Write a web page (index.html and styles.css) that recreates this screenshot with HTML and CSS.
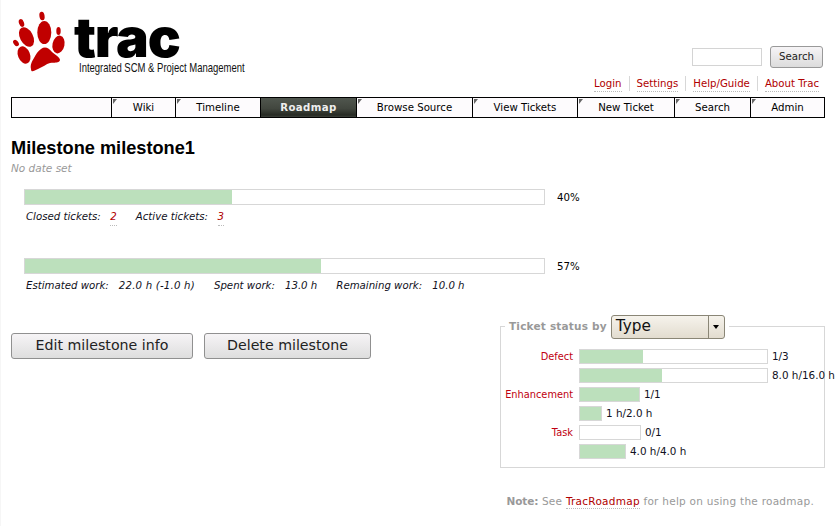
FILE: index.html
```html
<!DOCTYPE html>
<html lang="en">
<head>
<meta charset="utf-8">
<title>Milestone milestone1</title>
<link rel="stylesheet" href="styles.css">
</head>
<body>
<header class="top">
  <a class="logo">
    <svg class="paw" width="62" height="66" viewBox="12 10 62 66">
      <g fill="#c00000">
        <ellipse cx="44.3" cy="32.5" rx="7" ry="11.5"/>
        <ellipse cx="26.5" cy="37" rx="6.5" ry="10.5" transform="rotate(-28 26.5 37)"/>
        <ellipse cx="24" cy="55" rx="6" ry="9" transform="rotate(-22 24 55)"/>
        <ellipse cx="58.5" cy="44.5" rx="6" ry="9" transform="rotate(12 58.5 44.5)"/>
        <ellipse cx="21.5" cy="23" rx="2.5" ry="4" transform="rotate(-20 21.5 23)"/>
        <ellipse cx="42" cy="16" rx="2.6" ry="4.3" transform="rotate(-8 42 16)"/>
        <ellipse cx="58.5" cy="31" rx="2.2" ry="4"/>
        <ellipse cx="16" cy="43" rx="2.3" ry="3.6" transform="rotate(-38 16 43)"/>
        <path d="M41 49c4-3 8-1 11 3 3 3 8 5 8 8-1 4-7 2-10 3-4 1-7 4-12 6-4 2-7 4-7 0-1-4 1-8 3-11 2-4 4-7 7-9z"/>
      </g>
    </svg>
    <span class="brand">
      <span class="brand-name">trac</span>
      <span class="brand-sub">Integrated SCM &amp; Project Management</span>
    </span>
  </a>
  <div class="tools">
    <form class="search">
      <span class="search-input"></span>
      <span class="search-btn">Search</span>
    </form>
    <ul class="meta">
      <li><a>Login</a></li>
      <li><a>Settings</a></li>
      <li><a>Help/Guide</a></li>
      <li><a>About Trac</a></li>
    </ul>
  </div>
</header>

<nav class="nav">
  <span class="nav-space"></span>
  <a class="tab w-wiki">Wiki</a>
  <a class="tab w-timeline">Timeline</a>
  <a class="tab active w-roadmap">Roadmap</a>
  <a class="tab w-browse">Browse Source</a>
  <a class="tab w-view">View Tickets</a>
  <a class="tab w-new">New Ticket</a>
  <a class="tab w-search">Search</a>
  <a class="tab w-admin">Admin</a>
</nav>

<main class="content">
  <h1>Milestone milestone1</h1>
  <p class="date">No date set</p>

  <section class="stats first">
    <div class="progress-row">
      <div class="bar big"><div class="fill" style="width:39.9%"></div></div>
      <span class="pct">40%</span>
    </div>
    <p class="legend"><span>Closed tickets:</span><a class="num">2</a><span class="next">Active tickets:</span><a class="num">3</a></p>
  </section>

  <section class="stats second">
    <div class="progress-row">
      <div class="bar big"><div class="fill" style="width:57%"></div></div>
      <span class="pct">57%</span>
    </div>
    <p class="legend"><span>Estimated work:</span><span class="val val-long">22.0 h (-1.0 h)</span><span class="next">Spent work:</span><span class="val">13.0 h</span><span class="next">Remaining work:</span><span class="val">10.0 h</span></p>
  </section>

  <div class="lower">
    <div class="buttons">
      <span class="btn b-edit">Edit milestone info</span>
      <span class="btn b-del">Delete milestone</span>
    </div>
    <fieldset class="status">
      <legend><span class="legend-text">Ticket status by</span><span class="select"><span class="select-val">Type</span><span class="select-arrow"></span></span></legend>
      <div class="grid">
        <a class="lbl">Defect</a>
        <div class="cell"><div class="bar small" style="width:189px"><div class="fill" style="width:33.5%"></div></div><span>1/3</span></div>
        <span></span>
        <div class="cell"><div class="bar small" style="width:189px"><div class="fill" style="width:44%"></div></div><span>8.0 h/16.0 h</span></div>
        <a class="lbl">Enhancement</a>
        <div class="cell"><div class="bar small" style="width:61px"><div class="fill" style="width:100%"></div></div><span>1/1</span></div>
        <span></span>
        <div class="cell"><div class="bar small" style="width:23px"><div class="fill" style="width:100%"></div></div><span>1 h/2.0 h</span></div>
        <a class="lbl">Task</a>
        <div class="cell"><div class="bar small" style="width:62px"><div class="fill" style="width:0"></div></div><span>0/1</span></div>
        <span></span>
        <div class="cell"><div class="bar small" style="width:47px"><div class="fill" style="width:100%"></div></div><span>4.0 h/4.0 h</span></div>
      </div>
    </fieldset>
  </div>

  <p class="note"><strong>Note:</strong> See <a>TracRoadmap</a> for help on using the roadmap.</p>
</main>
</body>
</html>
```
FILE: styles.css
```css
* { box-sizing: border-box; }
html, body { margin: 0; padding: 0; }
body {
  width: 835px;
  height: 526px;
  overflow: hidden;
  background: #fff;
  color: #000;
  font-family: "DejaVu Sans", sans-serif;
  font-size: 10.2px;
  box-shadow: inset 1px 0 0 #f6f6f6;
}
a { color: #b00000; text-decoration: none; }

.top {
  height: 97px;
  display: flex;
  justify-content: space-between;
  padding: 10px 12px 0 12px;
}
.logo { display: flex; color: #000; align-items: flex-start; }
.paw { display: block; }
.brand { display: flex; flex-direction: column; width: 172px; }
.brand-name {
  font-family: "Inter", "Liberation Sans", sans-serif;
  font-weight: 900;
  font-size: 55px;
  line-height: 50px;
  letter-spacing: -1.2px;
  padding-top: 2px;
  color: #000;
}
.brand-sub {
  font-family: "Liberation Sans", sans-serif;
  font-size: 13px;
  line-height: 14px;
  margin: -1px 0 0 5px;
  color: #111;
  white-space: nowrap;
  transform: scaleX(0.73);
  transform-origin: left center;
}

.tools { display: flex; flex-direction: column; align-items: flex-end; }
.search { display: flex; align-items: center; gap: 8px; margin-top: 36px; }
.search-input { width: 70px; height: 18px; border: 1px solid #d4d4d4; background: #fff; }
.search-btn {
  width: 53px;
  height: 22px;
  border: 1px solid #999;
  border-radius: 3px;
  background: linear-gradient(#f6f4f6, #dcdcdc);
  color: #222;
  font-size: 10.2px;
  line-height: 20px;
  text-align: center;
}
.meta { list-style: none; display: flex; margin: 8px 4px 0 0; padding: 0; }
.meta li { padding: 0 7px; border-left: 1px solid #d7d7d7; height: 15px; line-height: 15px; }
.meta li:first-child { border-left: 0; }
.meta li:last-child { padding-right: 0; }
.meta a { border-bottom: 1px dotted #bbb; display: inline-block; height: 16px; }

.nav {
  display: flex;
  margin: 0 10px 0 11px;
  height: 21px;
  border: 1px solid #000;
  background: #fdfbfd;
}
.nav-space { flex: 1; }
.tab {
  position: relative;
  color: #000;
  border-left: 1px solid #000;
  text-align: center;
  line-height: 20px;
}
.tab::before {
  content: "";
  position: absolute;
  left: 1px;
  top: 1px;
  border-top: 5px solid #666;
  border-right: 4px solid transparent;
}
.w-wiki { width: 64px; }
.w-timeline { width: 85px; }
.w-roadmap { width: 96px; }
.w-browse { width: 116px; }
.w-view { width: 105px; }
.w-new { width: 97px; }
.w-search { width: 76px; }
.w-admin { width: 74px; }
.tab.active {
  background: linear-gradient(#50564e 0%, #42473f 55%, #262a23 90%, #3c413a 100%);
  color: #eee;
  font-weight: bold;
  letter-spacing: 0.4px;
}
.tab.active::before { display: none; }

.content { padding: 0 10px 0 11px; }
h1 {
  margin: 20px 0 0;
  font-family: "Liberation Sans", sans-serif;
  font-size: 18.2px;
  line-height: 21px;
  font-weight: bold;
}
.date { margin: 2px 0 0; color: #999; font-style: italic; line-height: 14px; font-size: 10.5px; }

.stats { padding-left: 13px; }
.stats.first { margin-top: 14px; }
.stats.second { margin-top: 32px; }
.progress-row { display: flex; align-items: center; }
.bar { border: 1px solid #d7d7d7; background: #fff; flex: none; }
.bar.big { width: 521px; height: 16px; }
.bar.small { height: 15px; }
.fill { height: 100%; background: #bce0bc; }
.pct { margin-left: 12px; }
.legend { margin: 5px 0 0 2px; font-style: italic; line-height: 14px; display: flex; color: #112; }
.legend .num { margin-left: 9.5px; border-bottom: 1px dotted #bbb; height: 16px; }
.legend .val { margin-left: 10px; }
.legend .val-long { letter-spacing: 0.2px; }
.legend .next { margin-left: 19px; }

.lower { display: flex; justify-content: space-between; align-items: flex-start; margin-top: 22px; }
.buttons { display: flex; gap: 11px; margin-top: 18px; }
.btn {
  height: 26px;
  border: 1px solid #909090;
  border-radius: 3px;
  background: linear-gradient(#f6f4f6, #dedede);
  color: #222;
  font-size: 14.2px;
  line-height: 23px;
  text-align: center;
}
.b-edit { width: 182px; }
.b-del { width: 167px; }

.status {
  width: 325px;
  height: 153px;
  margin: 0;
  padding: 0 0 0 4px;
  border: 1px solid #d7d7d7;
  min-width: 0;
}
.status legend { padding: 0 4px; display: flex; align-items: flex-start; height: 22px; }
.legend-text { color: #999; font-weight: bold; font-size: 10.5px; letter-spacing: 0.2px; line-height: 22px; }
.select {
  display: flex;
  flex: none;
  width: 114px;
  height: 24px;
  margin-left: 4px;
  border: 1px solid #8a8676;
  border-radius: 3px;
  background: linear-gradient(#f6f3ec, #e2dccf);
}
.select-val { flex: 1; padding-left: 4px; font-size: 15.3px; line-height: 21px; color: #111; }
.select-arrow {
  width: 16px;
  border-left: 1px solid #8a8676;
  position: relative;
}
.select-arrow::after {
  content: "";
  position: absolute;
  left: 4px;
  top: 9px;
  border-top: 4px solid #000;
  border-left: 3.5px solid transparent;
  border-right: 3.5px solid transparent;
}
.grid {
  display: grid;
  grid-template-columns: 68px 1fr;
  column-gap: 6px;
  row-gap: 4px;
  margin-top: 12px;
  line-height: 15px;
  white-space: nowrap;
}
.lbl { text-align: right; font-size: 9.8px; color: #c00010; }
.cell { display: flex; align-items: center; gap: 4px; color: #112; font-size: 10.4px; }

.note { margin: 25px 11px 0 0; text-align: right; color: #999; line-height: 16px; letter-spacing: 0.26px; font-size: 10.5px; }
.note strong { letter-spacing: -0.1px; }
.note a { border-bottom: 1px dotted #bbb; display: inline-block; height: 16px; }
```
